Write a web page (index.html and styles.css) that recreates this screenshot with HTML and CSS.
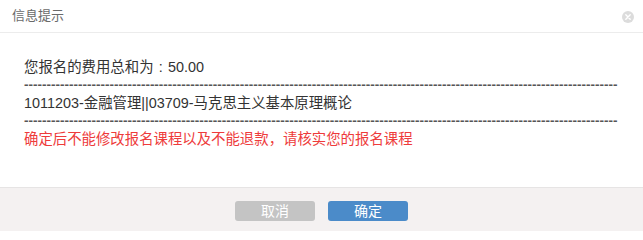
FILE: index.html
```html
<!DOCTYPE html>
<html lang="zh">
<head>
<meta charset="utf-8">
<title>信息提示</title>
<link rel="stylesheet" href="styles.css">
</head>
<body>
<div class="dialog">
  <div class="dialog-header">
    <span class="dialog-title">信息提示</span>
    <span class="dialog-close" aria-label="关闭">
      <svg width="12" height="12" viewBox="0 0 12 12">
        <circle cx="6" cy="6" r="6" fill="#dcdcdc"/>
        <path d="M3.8 3.8 L8.2 8.2 M8.2 3.8 L3.8 8.2" stroke="#ffffff" stroke-width="1.4" stroke-linecap="round"/>
      </svg>
    </span>
  </div>
  <div class="dialog-body">
    <div class="line">您报名的费用总和为<span class="colon">:</span>50.00</div>
    <div class="line dashes">------------------------------------------------------------------------------------------------------------------------------------</div>
    <div class="line">1011203-金融管理||03709-马克思主义基本原理概论</div>
    <div class="line dashes">------------------------------------------------------------------------------------------------------------------------------------</div>
    <div class="line warn">确定后不能修改报名课程以及不能退款，请核实您的报名课程</div>
  </div>
  <div class="dialog-footer">
    <button class="btn btn-cancel">取消</button>
    <button class="btn btn-ok">确定</button>
  </div>
</div>
</body>
</html>
```
FILE: styles.css
```css
html, body {
  margin: 0;
  padding: 0;
  background: #ffffff;
}
body {
  font-family: "Liberation Sans", "Noto Sans CJK SC", sans-serif;
  width: 643px;
  height: 231px;
  overflow: hidden;
}
.dialog {
  display: flex;
  flex-direction: column;
  width: 643px;
  height: 231px;
}
.dialog-header {
  height: 32px;
  border-bottom: 1px solid #ececec;
  display: flex;
  align-items: center;
  justify-content: space-between;
  padding: 0 9px 0 12px;
  flex: none;
}
.dialog-title {
  font-size: 13px;
  color: #6a6a6a;
  line-height: 32px;
}
.dialog-close {
  display: flex;
  width: 12px;
  height: 12px;
  margin-top: 1px;
}
.dialog-body {
  flex: 1;
  padding: 25px 23px 0 24px;
  color: #333333;
  font-size: 14.4px;
}
.line {
  line-height: 18px;
  height: 18px;
  white-space: nowrap;
}
.colon {
  display: inline-block;
  width: 1em;
  text-align: center;
}
.dashes {
  color: #555555;
  font-size: 13.5px;
  font-weight: bold;
}
.warn {
  color: #ee3b3b;
}
.dialog-footer {
  flex: none;
  border-top: 1px solid #e6e4e4;
  background: #f4f1f1;
  display: flex;
  justify-content: center;
  align-items: flex-start;
  gap: 13px;
  padding-top: 13px;
  box-sizing: border-box;
  height: 44px;
}
.btn {
  width: 80px;
  height: 20px;
  border: none;
  border-radius: 3px;
  color: #ffffff;
  font-family: "Liberation Sans", "Noto Sans CJK SC", sans-serif;
  font-size: 14px;
  line-height: 20px;
  padding: 0;
}
.btn-cancel {
  background: #c4c4c4;
}
.btn-ok {
  background: #4b8bc9;
}
```
